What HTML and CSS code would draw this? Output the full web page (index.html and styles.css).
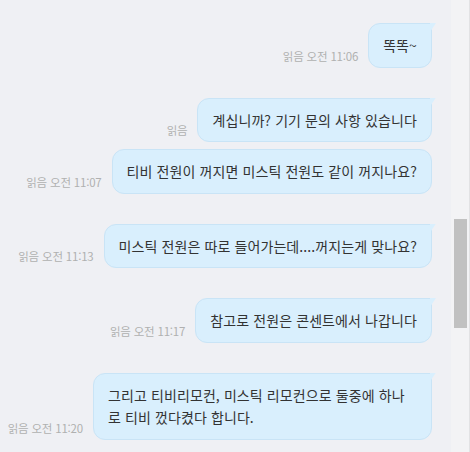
FILE: index.html
```html
<!DOCTYPE html>
<html lang="ko">
<head>
<meta charset="utf-8">
<link rel="stylesheet" href="styles.css">
</head>
<body>
<div class="window">
  <div class="chat">
    <div class="row">
      <span class="meta">읽음 오전 11:06</span>
      <div class="bubble tail">똑똑~</div>
    </div>
    <div class="row">
      <span class="meta">읽음</span>
      <div class="bubble tail">계십니까? 기기 문의 사항 있습니다</div>
    </div>
    <div class="row grouped">
      <span class="meta">읽음 오전 11:07</span>
      <div class="bubble">티비 전원이 꺼지면 미스틱 전원도 같이 꺼지나요?</div>
    </div>
    <div class="row">
      <span class="meta">읽음 오전 11:13</span>
      <div class="bubble tail">미스틱 전원은 따로 들어가는데....꺼지는게 맞나요?</div>
    </div>
    <div class="row">
      <span class="meta">읽음 오전 11:17</span>
      <div class="bubble tail">참고로 전원은 콘센트에서 나갑니다</div>
    </div>
    <div class="row">
      <span class="meta">읽음 오전 11:20</span>
      <div class="bubble tail">그리고 티비리모컨, 미스틱 리모컨으로 둘중에 하나로 티비 껐다켰다 합니다.</div>
    </div>
  </div>
  <div class="scrollbar">
    <div class="thumb"></div>
  </div>
</div>
</body>
</html>
```

FILE: styles.css
```css
html, body {
  margin: 0;
  padding: 0;
  height: 100%;
}
body {
  background: #eff0f4;
  font-family: "Noto Sans CJK KR", "Noto Sans", sans-serif;
  color: #333;
  overflow: hidden;
}
.window {
  display: flex;
  height: 452px;
}
.chat {
  flex: 1;
  display: flex;
  flex-direction: column;
  padding: 23px 19px 0 0;
  gap: 30px;
}
.row {
  display: flex;
  justify-content: flex-end;
  align-items: flex-end;
  gap: 10px;
}
.row.grouped {
  margin-top: -23px;
}
.meta {
  font-size: 11.5px;
  color: #b0b0b0;
  white-space: nowrap;
  margin-bottom: 4px;
  letter-spacing: -0.2px;
}
.bubble {
  position: relative;
  background: #d9effd;
  border: 1px solid #c9e4f6;
  border-radius: 12px;
  padding: 10px 14px;
  font-size: 14px;
  line-height: 22.5px;
  max-width: 309px;
  letter-spacing: 0.1px;
}
.bubble.tail {
  border-top-right-radius: 0;
}
.bubble.tail::after {
  content: "";
  position: absolute;
  top: -1px;
  right: -5px;
  width: 6px;
  height: 9px;
  background: #d9effd;
  clip-path: polygon(0 0, 100% 0, 0 100%);
}
.scrollbar {
  width: 19px;
  background: #f3f3f5;
  border-right: 1px solid #e2e2e4;
  box-sizing: border-box;
  padding: 219px 2px 0 3px;
}
.thumb {
  height: 109px;
  background: #c1c1c1;
}
```
